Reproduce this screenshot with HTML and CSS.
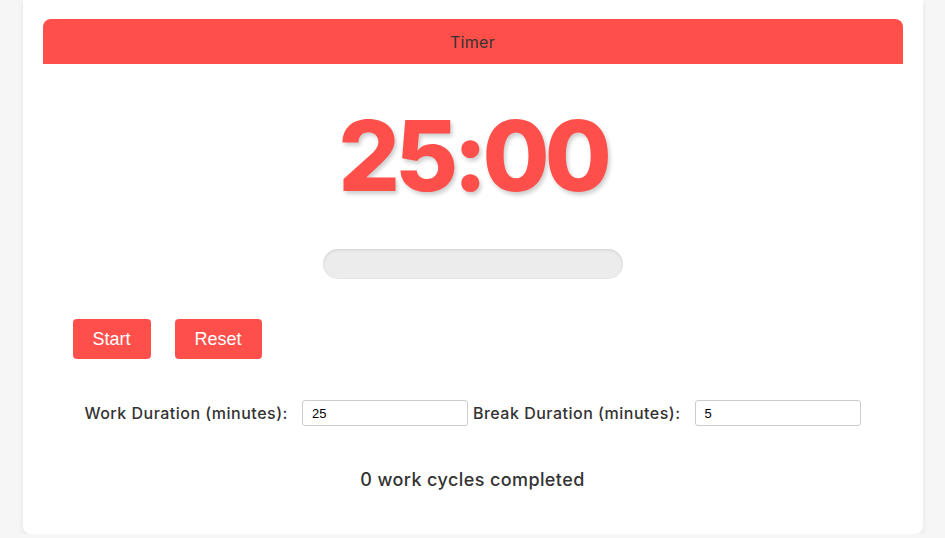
FILE: index.html
```html
<!DOCTYPE html>
<html>
<head>
<meta charset="utf-8">
<link rel="stylesheet" href="styles.css">
</head>
<body>
<div class="card">
  <div class="header">Timer</div>
  <div class="time">25:00</div>
  <div class="progress"></div>
  <div class="buttons">
    <button class="btn">Start</button>
    <button class="btn">Reset</button>
  </div>
  <div class="settings">
    <label class="label">Work Duration (minutes):</label>
    <input class="field field-first" type="text" value="25">
    <label class="label">Break Duration (minutes):</label>
    <input class="field" type="text" value="5">
  </div>
  <div class="cycles">0 work cycles completed</div>
</div>
</body>
</html>
```

FILE: styles.css
```css
html, body {
  margin: 0;
  padding: 0;
}
body {
  background: #f6f6f6;
  font-family: Inter, "Open Sans", sans-serif;
  color: #333;
}
.card {
  width: 860px;
  margin: 0 auto;
  background: #fff;
  border-radius: 0 0 8px 8px;
  box-shadow: 0 2px 6px rgba(0,0,0,0.08);
  padding: 19px 20px 0;
  height: 515px;
}
.header {
  background: #ff4f4b;
  height: 45px;
  border-radius: 8px 8px 0 0;
  display: flex;
  align-items: center;
  justify-content: center;
  font-size: 16px;
  letter-spacing: 0.3px;
  color: #333;
}
.time {
  margin-top: 32px;
  text-align: center;
  font-size: 97px;
  font-weight: 800;
  color: #ff4f4b;
  line-height: 120px;
  letter-spacing: -5px;
  text-shadow: 2px 3px 4px rgba(0,0,0,0.2);
}
.progress {
  width: 300px;
  height: 30px;
  margin: 33px auto 0;
  border-radius: 15px;
  background: #ececec;
  box-shadow: inset 0 1px 3px rgba(0,0,0,0.12);
}
.buttons {
  display: flex;
  gap: 24px;
  padding-left: 30px;
  margin-top: 40px;
}
.btn {
  background: #ff4f4b;
  color: #fff;
  border: none;
  border-radius: 4px;
  padding: 0 20px;
  height: 40px;
  font-family: "Liberation Sans", Arial, sans-serif;
  font-size: 18px;
}
.settings {
  display: flex;
  justify-content: center;
  align-items: center;
  margin-top: 41px;
}
.label {
  font-size: 16px;
  font-weight: 500;
  letter-spacing: 0.5px;
  color: #333;
  margin-right: 14px;
}
.field {
  width: 166px;
  height: 26px;
  box-sizing: border-box;
  border: 1px solid #ccc;
  border-radius: 3px;
  padding: 0 9px;
  font-family: "Liberation Sans", Arial, sans-serif;
  font-size: 13px;
  color: #000;
}
.field-first {
  margin-right: 5px;
}
.cycles {
  margin-top: 43px;
  text-align: center;
  font-size: 18px;
  font-weight: 500;
  letter-spacing: 0.4px;
  color: #333;
}
```
